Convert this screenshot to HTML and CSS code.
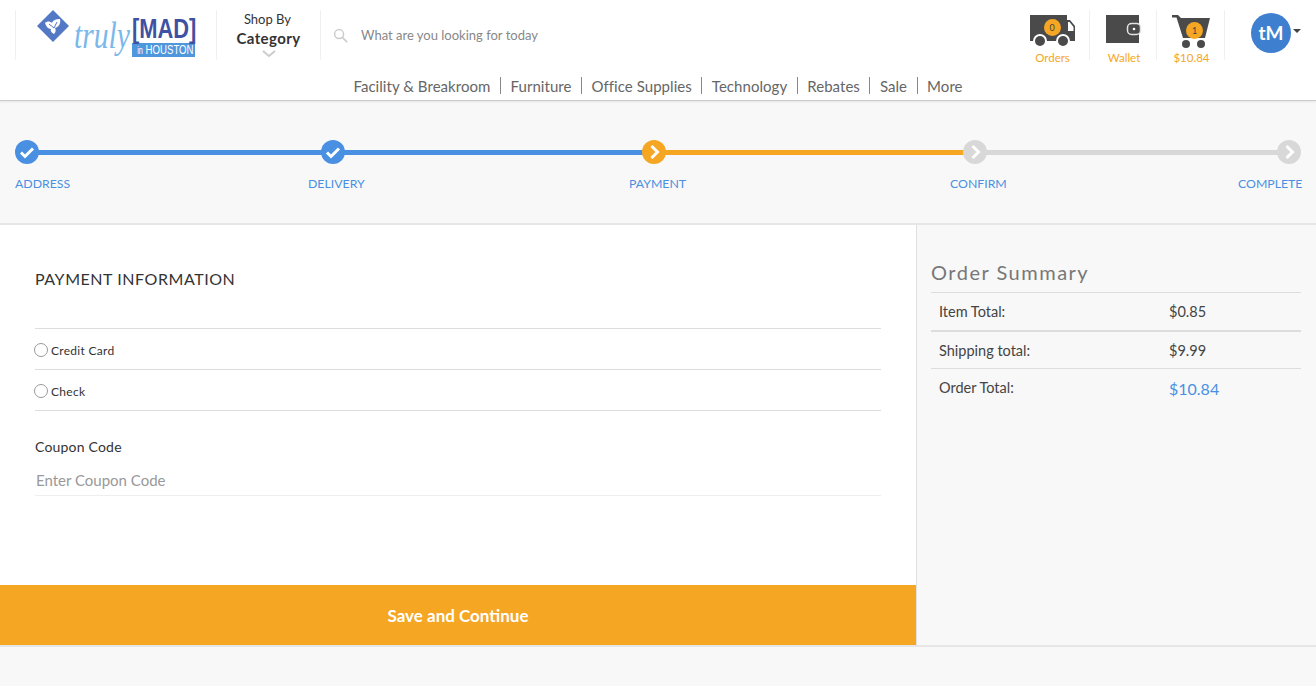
FILE: index.html
```html
<!DOCTYPE html>
<html lang="en">
<head>
    <meta charset="UTF-8">
    <meta name="viewport" content="width=device-width, initial-scale=1.0">
    <title>Checkout - Payment</title>
    <link rel="stylesheet" href="styles.css">
</head>
<body>
    <header class="site-header">
        <div class="top-row">
            <a class="logo" href="#">
                <svg class="logo-mark" width="32" height="32" viewBox="0 0 32 32">
                    <polygon points="16,0 32,16 16,32 0,16" fill="#5479c4"/>
                    <path d="M8 13 C10 11 13 11 15 13 C16 10 19 9 23 9 C24 13 22 17 18 18 C19 20 19 22 17 24 C15 23 13 21 14 19 C11 19 9 16 8 13Z" fill="#fff"/>
                    <path d="M12 14l5 4M20 12l-3 6" stroke="#5479c4" stroke-width="1" fill="none"/>
                </svg>
                <span class="logo-script">truly</span>
                <span class="logo-block">
                    <span class="logo-mad">[MAD]</span>
                    <span class="logo-city"><span class="logo-city-text"><small>in</small> HOUSTON</span></span>
                </span>
            </a>
            <div class="shop-by">
                <span class="shop-label">Shop By</span>
                <strong>Category</strong>
                <svg width="14" height="8" viewBox="0 0 14 8"><path d="M1 1l6 5 6-5" fill="none" stroke="#ccc" stroke-width="2"/></svg>
            </div>
            <form class="search">
                <svg width="15" height="15" viewBox="0 0 16 16"><circle cx="6.500" cy="6.500" r="4.800" fill="none" stroke="#ccc" stroke-width="1.600"/><path d="M10 10l5 5" stroke="#ccc" stroke-width="1.800"/></svg>
                <input type="text" placeholder="What are you looking for today">
            </form>
            <a class="tool tool-orders" href="#">
                <span class="tool-icon">
                    <svg width="46" height="32" viewBox="0 0 46 32">
                        <path d="M0 0H37V5H40L45 11V26H0Z" fill="#4a4a4a"/>
                        <path d="M38 7H39.500L43.500 12V16H38Z" fill="#fff"/>
                        <circle cx="10" cy="26" r="7" fill="#fff"/><circle cx="10" cy="26" r="5" fill="#4a4a4a"/>
                        <circle cx="33" cy="26" r="7" fill="#fff"/><circle cx="33" cy="26" r="5" fill="#4a4a4a"/>
                    </svg>
                    <span class="badge">0</span>
                </span>
                <span class="tool-label">Orders</span>
            </a>
            <a class="tool tool-wallet" href="#">
                <span class="tool-icon">
                    <svg width="36" height="29" viewBox="0 0 36 29">
                        <rect width="33" height="28" fill="#4a4a4a"/>
                        <rect x="21.500" y="8.500" width="13" height="11" rx="4" fill="#4a4a4a" stroke="#e4e4e4" stroke-width="1.500"/>
                        <circle cx="28" cy="14" r="1.300" fill="#fff"/>
                    </svg>
                </span>
                <span class="tool-label">Wallet</span>
            </a>
            <a class="tool tool-cart" href="#">
                <span class="tool-icon">
                    <svg width="39" height="34" viewBox="0 0 39 34">
                        <path d="M0 0H6L9 3H38L33 23H11L4.500 2.500H0Z" fill="#4a4a4a"/>
                        <circle cx="14" cy="29" r="4" fill="#4a4a4a"/>
                        <circle cx="29" cy="29" r="4" fill="#4a4a4a"/>
                    </svg>
                    <span class="badge">1</span>
                </span>
                <span class="tool-label">$10.84</span>
            </a>
            <div class="account">
                <span class="avatar">tM</span>
                <span class="caret"></span>
            </div>
        </div>
        <nav class="main-nav">
            <a href="#">Facility &amp; Breakroom</a>
            <a href="#">Furniture</a>
            <a href="#">Office Supplies</a>
            <a href="#">Technology</a>
            <a href="#">Rebates</a>
            <a href="#">Sale</a>
            <a href="#">More</a>
        </nav>
    </header>

    <section class="stepper">
        <div class="step done">
            <span class="dot"><svg width="16" height="13" viewBox="0 0 16 13"><path d="M2 6.500l4 4L14 2.500" fill="none" stroke="#fff" stroke-width="3"/></svg></span>
            <span class="step-label">ADDRESS</span>
        </div>
        <div class="step done">
            <span class="dot"><svg width="16" height="13" viewBox="0 0 16 13"><path d="M2 6.500l4 4L14 2.500" fill="none" stroke="#fff" stroke-width="3"/></svg></span>
            <span class="step-label shift">DELIVERY</span>
        </div>
        <div class="step current">
            <span class="dot"><svg width="11" height="16" viewBox="0 0 11 16"><path d="M2.500 2L8.500 8 2.500 14" fill="none" stroke="#fff" stroke-width="3"/></svg></span>
            <span class="step-label shift">PAYMENT</span>
        </div>
        <div class="step todo">
            <span class="dot"><svg width="11" height="16" viewBox="0 0 11 16"><path d="M2.500 2L8.500 8 2.500 14" fill="none" stroke="#fff" stroke-width="3"/></svg></span>
            <span class="step-label shift">CONFIRM</span>
        </div>
        <div class="step last todo">
            <span class="dot"><svg width="11" height="16" viewBox="0 0 11 16"><path d="M2.500 2L8.500 8 2.500 14" fill="none" stroke="#fff" stroke-width="3"/></svg></span>
            <span class="step-label shift-end">COMPLETE</span>
        </div>
    </section>

    <main class="checkout">
        <section class="payment">
            <div class="payment-body">
                <h2>PAYMENT INFORMATION</h2>
                <div class="methods">
                    <label class="method"><input type="radio" name="method"> Credit Card</label>
                    <label class="method"><input type="radio" name="method"> Check</label>
                </div>
                <label class="coupon-label" for="coupon">Coupon Code</label>
                <input class="coupon-input" id="coupon" type="text" placeholder="Enter Coupon Code">
            </div>
            <button class="save-btn" type="button">Save and Continue</button>
        </section>
        <aside class="summary">
            <h3>Order Summary</h3>
            <div class="summary-row row-item"><span>Item Total:</span><span class="amount">$0.85</span></div>
            <div class="summary-row row-shipping"><span>Shipping total:</span><span class="amount">$9.99</span></div>
            <div class="summary-row row-total"><span>Order Total:</span><span class="amount total">$10.84</span></div>
        </aside>
    </main>
</body>
</html>
```

FILE: styles.css
```css
* {
    box-sizing: border-box;
}
body {
    margin: 0;
    height: 686px;
    overflow: hidden;
    background-color: #f8f8f8;
    font-family: Lato, "Open Sans", sans-serif;
    color: #444;
}
a {
    color: inherit;
    text-decoration: none;
}

/* header */
.site-header {
    height: 101px;
    background-color: #fff;
    border-bottom: 1px solid #ccc;
    box-shadow: 0 1px 2px rgba(0, 0, 0, 0.08);
}
.top-row {
    display: flex;
    height: 70px;
    padding: 10px 0 0 15px;
}
.logo {
    display: flex;
    align-items: flex-start;
    width: 201px;
    height: 50px;
    padding-left: 21px;
    border-left: 1px solid #f0f0f0;
}
.logo-mark {
    flex: none;
}
.logo-script {
    flex: none;
    width: 58px;
    margin: 6px 0 0 5px;
    font-family: "Liberation Serif", serif;
    font-style: italic;
    font-size: 38px;
    line-height: 38px;
    color: #7ab8ec;
    transform: scaleX(0.78);
    transform-origin: left center;
}
.logo-block {
    display: flex;
    flex-direction: column;
    width: 64px;
    margin-top: 6px;
}
.logo-mad {
    font-family: "Liberation Sans", sans-serif;
    font-weight: bold;
    font-size: 27px;
    line-height: 26px;
    color: #3f51a3;
    white-space: nowrap;
    transform: scaleX(0.81);
    transform-origin: left center;
}
.logo-city {
    width: 63px;
    height: 14px;
    margin-top: 1px;
    background-color: #4f97dd;
    color: #fff;
    font-family: "Liberation Sans", sans-serif;
    font-size: 13px;
    line-height: 14px;
    white-space: nowrap;
}
.logo-city-text {
    display: inline-block;
    padding-left: 7px;
    transform: scaleX(0.74);
    transform-origin: left center;
}
.logo-city small {
    font-size: 10px;
}
.shop-by {
    display: flex;
    flex-direction: column;
    align-items: center;
    width: 105px;
    height: 50px;
    border-left: 1px solid #f0f0f0;
    border-right: 1px solid #f0f0f0;
    font-size: 13px;
    color: #333;
}
.shop-label {
    margin-right: 2px;
    line-height: 18px;
}
.shop-by strong {
    font-size: 15px;
    line-height: 20px;
    letter-spacing: 0.4px;
}
.shop-by svg {
    margin-top: 2px;
}
.search {
    flex: 1;
    display: flex;
    align-items: center;
    gap: 13px;
    height: 50px;
    padding-left: 12px;
}
.search input {
    flex: 1;
    border: none;
    outline: none;
    padding: 0;
    font-family: inherit;
    font-size: 13px;
    background: none;
}
.search input::placeholder {
    color: #888;
    opacity: 1;
}
.tool {
    display: flex;
    flex-direction: column;
    align-items: center;
    height: 50px;
    border-right: 1px solid #f0f0f0;
}
.tool-orders {
    width: 80px;
    padding-left: 6px;
}
.tool-wallet {
    width: 67px;
    padding-left: 2px;
}
.tool-cart {
    width: 68px;
    padding-left: 2px;
}
.tool-icon {
    position: relative;
    flex: none;
    display: block;
    height: 36px;
    padding-top: 5px;
}
.tool-icon svg {
    display: block;
}
.tool-label {
    flex: none;
    margin-top: 5px;
    font-size: 11.500px;
    line-height: 14px;
    color: #f5a623;
}
.badge {
    position: absolute;
    width: 17px;
    height: 17px;
    border-radius: 50%;
    background-color: #f5a623;
    color: #444;
    font-size: 9px;
    line-height: 17px;
    text-align: center;
}
.tool-orders .badge {
    left: 14px;
    top: 9px;
}
.tool-cart .badge {
    left: 14px;
    top: 12px;
}
.account {
    display: flex;
    align-items: flex-start;
    width: 91px;
    padding: 3px 0 0 26px;
}
.avatar {
    width: 40px;
    height: 40px;
    border-radius: 50%;
    background-color: #3f7fcf;
    color: #fff;
    font-size: 19px;
    font-weight: bold;
    line-height: 40px;
    text-align: center;
}
.caret {
    margin: 16px 0 0 2px;
    border-top: 4px solid #444;
    border-left: 4px solid transparent;
    border-right: 4px solid transparent;
}
.main-nav {
    display: flex;
    justify-content: center;
    height: 17px;
    margin-top: 7px;
}
.main-nav a {
    padding: 0 9.500px;
    border-left: 1px solid #888;
    font-size: 15px;
    line-height: 18px;
    height: 17px;
    color: #666;
    letter-spacing: 0.05px;
}
.main-nav a:first-child {
    border-left: none;
}

/* steps */
.stepper {
    display: grid;
    grid-template-columns: 306px 321px 321px 314px 24px;
    height: 124px;
    padding: 39px 0 0 15px;
    border-bottom: 2px solid #e6e6e6;
}
.step {
    position: relative;
    display: flex;
    flex-direction: column;
    align-items: flex-start;
}
.step::after {
    content: "";
    position: absolute;
    left: 12px;
    right: -12px;
    top: 10px;
    height: 5px;
    background-color: #d8d8d8;
}
.step.done::after {
    background-color: #4a90e2;
}
.step.current::after {
    background-color: #f5a623;
}
.step.last::after {
    display: none;
}
.dot {
    position: relative;
    z-index: 1;
    display: flex;
    align-items: center;
    justify-content: center;
    width: 24px;
    height: 24px;
    border-radius: 50%;
    background-color: #d8d8d8;
}
.done .dot {
    background-color: #4a90e2;
}
.current .dot {
    background-color: #f5a623;
}
.step-label {
    margin-top: 12px;
    font-size: 12.300px;
    line-height: 16px;
    color: #4a90e2;
    white-space: nowrap;
}
.shift {
    margin-left: -13px;
}
.shift-end {
    margin-left: -39px;
}

/* main panels */
.checkout {
    display: flex;
    height: 422px;
    border-bottom: 2px solid #e6e6e6;
}
.payment {
    display: flex;
    flex-direction: column;
    width: 916px;
    background-color: #fff;
}
.payment-body {
    flex: 1;
    padding: 44px 35px 0;
}
.payment h2 {
    margin: 0;
    font-size: 16px;
    font-weight: normal;
    line-height: 20px;
    color: #333;
    letter-spacing: 0.55px;
}
.methods {
    margin-top: 39px;
    border-top: 1px solid #ddd;
}
.method {
    display: flex;
    align-items: center;
    gap: 3px;
    height: 41px;
    padding-top: 2px;
    border-bottom: 1px solid #ddd;
    font-size: 12px;
    color: #333;
    letter-spacing: 0.3px;
}
.method input {
    appearance: none;
    width: 14px;
    height: 14px;
    margin: 0 0 0 -1px;
    border: 1px solid #999;
    border-radius: 50%;
    background-color: #fff;
}
.coupon-label {
    display: block;
    margin-top: 27px;
    font-size: 14px;
    line-height: 18px;
    color: #333;
    letter-spacing: 0.2px;
}
.coupon-input {
    display: block;
    width: 100%;
    height: 31px;
    margin-top: 9px;
    padding: 0 1px;
    border: none;
    border-bottom: 1px solid #eee;
    outline: none;
    font-family: inherit;
    font-size: 15px;
}
.coupon-input::placeholder {
    color: #999;
    opacity: 1;
}
.save-btn {
    height: 60px;
    flex-shrink: 0;
    border: none;
    background-color: #f5a623;
    color: #fff;
    font-family: inherit;
    font-size: 17px;
    font-weight: bold;
    cursor: pointer;
}
.summary {
    flex: 1;
    padding: 34px 15px 0 14px;
    border-left: 1px solid #e0e0e0;
}
.summary h3 {
    margin: 0;
    height: 34px;
    font-size: 20px;
    font-weight: normal;
    line-height: 26px;
    color: #777;
    letter-spacing: 1.500px;
    border-bottom: 1px solid #ddd;
}
.summary-row {
    display: grid;
    grid-template-columns: 230px 1fr;
    padding-left: 8px;
    font-size: 14.500px;
    color: #444;
    align-items: center;
}
.row-item {
    height: 39px;
    border-bottom: 2px solid #ddd;
}
.row-shipping {
    height: 37px;
    border-bottom: 1px solid #ddd;
}
.row-total {
    height: 37px;
}
.amount.total {
    margin-top: 2px;
    color: #4a90e2;
    font-size: 16px;
}
```
